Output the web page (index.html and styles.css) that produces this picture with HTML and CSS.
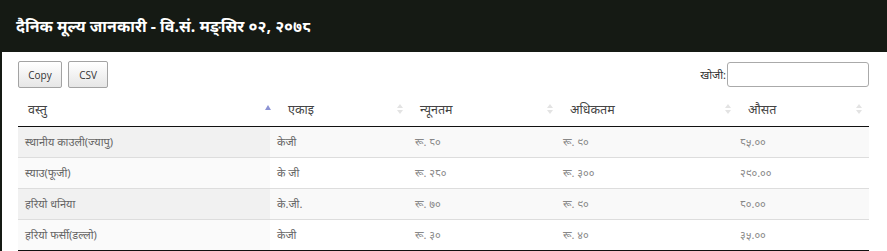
FILE: index.html
```html
<!DOCTYPE html>
<html lang="ne">
<head>
<meta charset="utf-8">
<title>दैनिक मूल्य जानकारी</title>
<link rel="stylesheet" href="styles.css">
</head>
<body>
<div class="titlebar"><h1 class="title">दैनिक मूल्य जानकारी - वि.सं. मङ्सिर ०२, २०७८</h1></div>
<div class="content">
  <div class="toolbar">
    <div class="buttons">
      <button class="btn btn-copy">Copy</button>
      <button class="btn btn-csv">CSV</button>
    </div>
    <label class="search">खोजी:<input class="search-input" type="text"></label>
  </div>
  <table class="grid head">
    <colgroup><col class="h1"><col class="h2"><col class="h3"><col class="h4"><col class="h5"></colgroup>
    <thead>
      <tr>
        <th class="sorted">वस्तु<span class="sort asc"></span></th>
        <th>एकाइ<span class="sort both"></span></th>
        <th>न्यूनतम<span class="sort both"></span></th>
        <th>अधिकतम<span class="sort both"></span></th>
        <th>औसत<span class="sort both"></span></th>
      </tr>
    </thead>
  </table>
  <table class="grid body">
    <colgroup><col class="b1"><col class="b2"><col class="b3"><col class="b4"><col class="b5"></colgroup>
    <tbody>
      <tr class="odd"><td class="sorted">स्थानीय काउली(ज्यापु)</td><td>केजी</td><td class="num">रू. ८०</td><td class="num">रू. ९०</td><td class="num">८५.००</td></tr>
      <tr class="even"><td class="sorted">स्याउ(फूजी)</td><td>के जी</td><td class="num">रू. २८०</td><td class="num">रू. ३००</td><td class="num">२९०.००</td></tr>
      <tr class="odd"><td class="sorted">हरियो धनिया</td><td>के.जी.</td><td class="num">रू. ७०</td><td class="num">रू. ९०</td><td class="num">८०.००</td></tr>
      <tr class="even"><td class="sorted">हरियो फर्सी(डल्लो)</td><td>केजी</td><td class="num">रू. ३०</td><td class="num">रू. ४०</td><td class="num">३५.००</td></tr>
    </tbody>
  </table>
</div>
</body>
</html>
```
FILE: styles.css
```css
html, body {
  margin: 0;
  padding: 0;
  background: #fff;
  font-family: "Noto Sans", "Noto Sans Devanagari", "Lohit Devanagari", sans-serif;
}
.titlebar {
  background: #151a14;
  height: 52px;
  padding-left: 16px;
  display: flex;
  align-items: center;
}
.title {
  margin: 0;
  color: #fff;
  font-size: 16px;
  font-weight: bold;
  line-height: 24px;
}
.content {
  border-left: 2px solid #151a14;
  padding: 9px 18px 0 16px;
  min-height: 199px;
  box-sizing: border-box;
}
.toolbar {
  display: flex;
  justify-content: space-between;
  align-items: flex-start;
  width: 851px;
}
.buttons {
  display: flex;
  gap: 6px;
}
.btn {
  height: 27px;
  border: 1px solid #a3a3a3;
  border-radius: 2px;
  background: linear-gradient(#fff, #e6e6e6);
  color: #333;
  font-family: "Open Sans", sans-serif;
  font-size: 10px;
  padding: 0;
  box-sizing: border-box;
}
.btn-copy { width: 44px; }
.btn-csv { width: 40px; }
.search {
  display: flex;
  align-items: center;
  font-size: 11px;
  color: #333;
  margin-top: 1px;
}
.search-input {
  width: 142px;
  height: 25px;
  box-sizing: border-box;
  border: 1px solid #aaa;
  border-radius: 3px;
  margin: 0 0 0 1px;
  padding: 0 4px;
}
.grid {
  border-collapse: collapse;
  table-layout: fixed;
  width: 851px;
  color: #666;
}
.head { margin-top: 4px; }
.h1 { width: 260px; }
.h2 { width: 132px; }
.h3 { width: 150px; }
.h4 { width: 178px; }
.h5 { width: 131px; }
.b1 { width: 252px; }
.b2 { width: 138px; }
.b3 { width: 148px; }
.b4 { width: 177px; }
.b5 { width: 136px; }
.head th {
  position: relative;
  text-align: left;
  font-weight: normal;
  font-size: 12.5px;
  line-height: 15px;
  color: #444;
  padding: 10px 18px 9px 10px;
  border-bottom: 1px solid #111;
}
.sort {
  position: absolute;
  right: 7px;
  top: 50%;
  width: 6px;
  height: 12px;
  margin-top: -6px;
}
.sort.asc::before {
  content: "";
  position: absolute;
  left: 0;
  top: 2px;
  border-left: 3px solid transparent;
  border-right: 3px solid transparent;
  border-bottom: 5px solid #8c93d4;
}
.sort.both::before, .sort.both::after {
  content: "";
  position: absolute;
  left: 0;
  border-left: 3px solid transparent;
  border-right: 3px solid transparent;
}
.sort.both::before { top: 1px; border-bottom: 4px solid #e3e3e3; }
.sort.both::after { top: 7px; border-top: 4px solid #e3e3e3; }
.body td {
  font-size: 11px;
  line-height: 14px;
  padding: 8px 6px 8px 7px;
  border-top: 1px solid #ddd;
  white-space: nowrap;
}
.body td.num { color: #888; }
.body tr:first-child td { border-top: none; }
.body tr:last-child td { border-bottom: 1px solid #111; }
.odd td { background: #f9f9f9; }
.odd td.sorted { background: #f1f1f1; }
.even td { background: #fff; }
.even td.sorted { background: #fafafa; }
```
